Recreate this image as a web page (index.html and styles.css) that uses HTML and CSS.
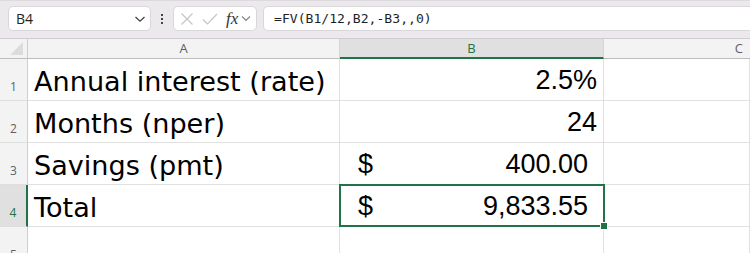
FILE: index.html
```html
<!DOCTYPE html>
<html>
<head>
<meta charset="utf-8">
<link rel="stylesheet" href="styles.css">
</head>
<body>
<div class="app">
  <div class="topbar">
    <div class="namebox">
      <span class="ref">B4</span>
      <svg class="chev" width="12" height="8" viewBox="0 0 12 8"><path d="M1.5 2 L6 6.2 L10.5 2" fill="none" stroke="#444" stroke-width="1.3"/></svg>
    </div>
    <div class="dots"><i></i><i></i><i></i></div>
    <div class="fxbox">
      <svg class="x" width="14" height="14" viewBox="0 0 14 14"><path d="M1.5 1.5 L12.5 12.5 M12.5 1.5 L1.5 12.5" stroke="#c4c4c4" stroke-width="1.2" fill="none"/></svg>
      <svg class="ok" width="16" height="14" viewBox="0 0 16 14"><path d="M1 7.5 L5.5 12 L15 2" stroke="#c4c4c4" stroke-width="1.2" fill="none"/></svg>
      <span class="fx">fx</span>
      <svg class="chev2" width="10" height="7" viewBox="0 0 10 7"><path d="M1 1.5 L5 5.3 L9 1.5" fill="none" stroke="#8a8a8a" stroke-width="1.2"/></svg>
    </div>
    <div class="formula">=FV(B1/12,B2,-B3,,0)</div>
  </div>
  <div class="sheet">
    <div class="corner"><span class="tri"></span></div>
    <div class="colhdr">A</div>
    <div class="colhdr sel">B</div>
    <div class="colhdr right">C</div>

    <div class="rowhdr">1</div>
    <div class="cell label">Annual interest (rate)</div>
    <div class="cell num">2.5%</div>
    <div class="cell"></div>

    <div class="rowhdr">2</div>
    <div class="cell label">Months (nper)</div>
    <div class="cell num">24</div>
    <div class="cell"></div>

    <div class="rowhdr">3</div>
    <div class="cell label">Savings (pmt)</div>
    <div class="cell acct"><span>$</span><span>400.00</span></div>
    <div class="cell"></div>

    <div class="rowhdr sel">4</div>
    <div class="cell label">Total</div>
    <div class="cell acct active"><span>$</span><span>9,833.55</span><b class="handle"></b></div>
    <div class="cell"></div>

    <div class="rowhdr">5</div>
    <div class="cell"></div>
    <div class="cell"></div>
    <div class="cell"></div>
  </div>
</div>
</body>
</html>
```
FILE: styles.css
```css
html, body {
  margin: 0;
  padding: 0;
  background: #ffffff;
}
.app {
  width: 750px;
  height: 253px;
  overflow: hidden;
  font-family: "Liberation Sans", Arial, sans-serif;
}
.topbar {
  box-sizing: border-box;
  background: #ece9ed;
  border-bottom: 1px solid #cfcdd0;
  border-top: 1px solid #dddadd;
  display: flex;
  align-items: flex-start;
  padding: 5px 0 0 8px;
  height: 39px;
}
.namebox {
  width: 143px;
  height: 25px;
  box-sizing: border-box;
  background: #fff;
  border: 1px solid #d9d7da;
  border-radius: 5px;
  display: flex;
  align-items: center;
  justify-content: space-between;
  padding: 0 4px 0 7px;
}
.ref {
  font-family: "Open Sans", "Liberation Sans", sans-serif;
  font-size: 14px;
  color: #242424;
}
.dots {
  width: 22px;
  height: 25px;
  display: flex;
  flex-direction: column;
  align-items: center;
  justify-content: center;
  gap: 2px;
}
.dots i {
  display: block;
  width: 2px;
  height: 2px;
  background: #444;
}
.fxbox {
  width: 84px;
  height: 25px;
  box-sizing: border-box;
  background: #fff;
  border: 1px solid #d9d7da;
  border-radius: 5px;
  display: flex;
  align-items: center;
  padding: 0 0 0 6px;
}
.fxbox .x { margin-right: 8px; }
.fxbox .ok { margin-right: 8px; }
.fx {
  font-family: "Liberation Serif", "DejaVu Serif", serif;
  font-style: italic;
  font-size: 17px;
  color: #333;
  margin-right: 3px;
}
.formula {
  margin-left: 6px;
  flex: 1;
  height: 25px;
  box-sizing: border-box;
  background: #fff;
  border: 1px solid #d9d7da;
  border-right: none;
  border-radius: 5px 0 0 5px;
  font-family: "DejaVu Sans Mono", "Liberation Mono", monospace;
  font-size: 13.1px;
  line-height: 23px;
  padding-left: 10px;
  color: #1f1f1f;
}
.sheet {
  display: grid;
  grid-template-columns: 28px 312px 264px 146px;
  grid-template-rows: 20px repeat(5, 42px);
}
.corner {
  background: #f3f3f3;
  border-right: 1px solid #cfcfcf;
  border-bottom: 1px solid #bdbdbd;
  box-sizing: border-box;
  position: relative;
}
.tri {
  position: absolute;
  right: 4px;
  bottom: 3px;
  width: 0;
  height: 0;
  border-left: 13px solid transparent;
  border-bottom: 13px solid #dcdcdc;
}
.colhdr {
  background: #f3f3f3;
  border-right: 1px solid #d4d4d4;
  border-bottom: 1px solid #bdbdbd;
  box-sizing: border-box;
  font-family: "Open Sans", "Liberation Sans", sans-serif;
  font-size: 13px;
  color: #5f5f5f;
  text-align: center;
  line-height: 19px;
}
.colhdr.sel {
  background: #e0e0e0;
  color: #217346;
  border-bottom: 2px solid #217346;
  line-height: 18px;
}
.colhdr.right {
  text-align: right;
  padding-right: 7px;
  border-right: none;
}
.rowhdr {
  background: #f3f3f3;
  border-right: 1px solid #cfcfcf;
  border-bottom: 1px solid #dedede;
  box-sizing: border-box;
  font-family: "Open Sans", "Liberation Sans", sans-serif;
  font-size: 12px;
  color: #5f5f5f;
  display: flex;
  align-items: flex-end;
  justify-content: center;
  padding-bottom: 5px;
}
.rowhdr.sel {
  background: #e0e0e0;
  color: #217346;
  border-right: 2px solid #217346;
}
.cell {
  border-right: 1px solid #e1e1e1;
  border-bottom: 1px solid #e1e1e1;
  box-sizing: border-box;
  font-family: "Liberation Sans", Arial, sans-serif;
  font-size: 27px;
  color: #000;
  display: flex;
  align-items: flex-end;
  padding: 0 6px 4px 6px;
  white-space: nowrap;
  position: relative;
}
.cell.label {
  font-family: "DejaVu Sans", "Liberation Sans", sans-serif;
  font-size: 27.1px;
  padding-bottom: 3px;
}
.cell.num {
  justify-content: flex-end;
  padding-right: 6px;
}
.cell.acct {
  justify-content: space-between;
  padding: 0 15px 4px 18px;
}
.active::after {
  content: "";
  position: absolute;
  left: -1px;
  top: -1px;
  right: -2px;
  bottom: -1px;
  border: 2px solid #217346;
  pointer-events: none;
}
.handle {
  position: absolute;
  right: -5px;
  bottom: -4px;
  width: 6px;
  height: 6px;
  background: #217346;
  border: 1px solid #fff;
  z-index: 2;
}
```
